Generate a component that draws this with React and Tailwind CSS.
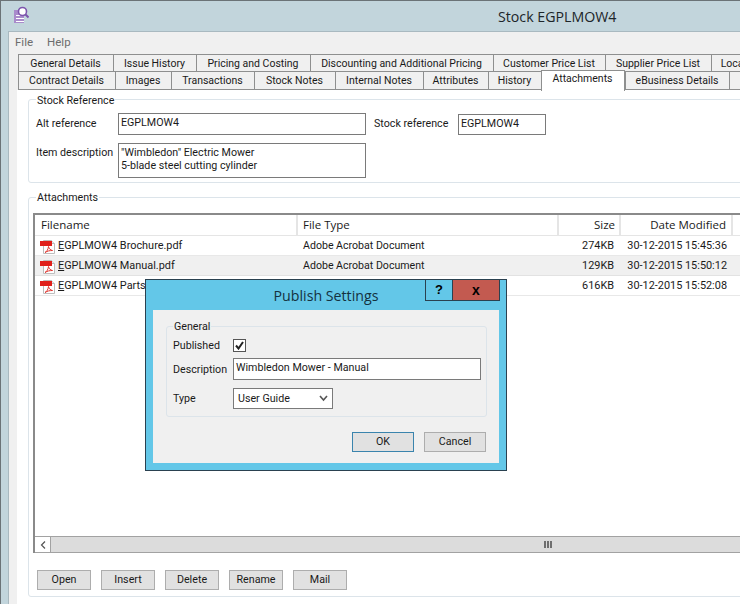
import React from 'react';

const row1 = [
  ['General Details', 95],
  ['Issue History', 83],
  ['Pricing and Costing', 114],
  ['Discounting and Additional Pricing', 183],
  ['Customer Price List', 112],
  ['Supplier Price List', 106],
  ['Location', 60],
];

const row2 = [
  ['Contract Details', 97],
  ['Images', 56],
  ['Transactions', 83],
  ['Stock Notes', 81],
  ['Internal Notes', 88],
  ['Attributes', 65],
  ['History', 53],
  ['Attachments', 84, true],
  ['eBusiness Details', 104],
  ['', 30],
];

const files = [
  { name: 'GPLMOW4 Brochure.pdf', size: '274KB', date: '30-12-2015 15:45:36' },
  { name: 'GPLMOW4 Manual.pdf', size: '129KB', date: '30-12-2015 15:50:12', selected: true },
  { name: 'GPLMOW4 Parts List.pdf', size: '616KB', date: '30-12-2015 15:52:08' },
];

const PdfIcon = () => (
  <svg width="16" height="16" viewBox="0 0 16 16" className="shrink-0">
    <path d="M3.5 2.5H11.500L14.500 5.500v10h-11z" fill="#fff" stroke="#bdbdbd" />
    <path d="M11.500 2.500v3h3" fill="#eee" stroke="#bdbdbd" />
    <rect x="0" y="3" width="12" height="5" fill="#e0201b" />
    <path d="M5 14.500c2-1 3-3 3.500-6 .5 2.500 2 3.500 4 4-3 0-5 .5-7.500 2z" fill="none" stroke="#e0362f" strokeWidth="1" />
  </svg>
);

const AppIcon = () => (
  <svg width="16" height="18" viewBox="0 0 16 18">
    <rect x="1" y="4" width="10" height="13" fill="#a98bcb" />
    <rect x="3" y="9" width="8" height="1" fill="#fff" />
    <rect x="3" y="12" width="8" height="1" fill="#fff" />
    <rect x="3" y="15" width="8" height="1" fill="#fff" />
    <circle cx="9.500" cy="5.500" r="4" fill="#fff" stroke="#7d55ad" strokeWidth="1.600" />
    <path d="M12.500 8.500l3 3" stroke="#7d55ad" strokeWidth="2" />
  </svg>
);

const Btn = ({ label, className = '' }) => (
  <div className={`h-5 flex items-center justify-center bg-[#e1e1e1] border border-[#adadad] ${className}`}>{label}</div>
);

const App = () => {
  return (
    <div className="relative w-[740px] h-[604px] overflow-hidden bg-[#c2d5dc] border-t border-l border-[#6b7377] text-[10.700px] leading-[14px] whitespace-nowrap text-[#1a1a1a] font-['Roboto',sans-serif]">
      {/* title bar */}
      <div className="relative h-[30px] flex items-center">
        <div className="absolute left-[12px] top-[5px]"><AppIcon /></div>
        <div className="ml-[497px] mt-px text-[14.200px] leading-5 text-[#1c2529] font-['Open_Sans',sans-serif]">Stock EGPLMOW4</div>
      </div>

      <div className="ml-[7px] h-[573px] bg-[#f0f0f0] border-t border-l border-[#a9b9c0] flex flex-col">
        {/* menu */}
        <div className="h-[22px] flex items-center gap-[14px] pl-[6px] pb-[2px] text-[11.500px] text-[#6d6d6d]">
          <span>File</span>
          <span>Help</span>
        </div>

        {/* tabs */}
        <div className="flex pl-[9px] h-[18px] text-[10.500px]">
          {row1.map(([t, w]) => (
            <div key={t} style={{ width: w }} className="shrink-0 h-[18px] pt-px pr-px flex items-center justify-center bg-[#f0f0f0] border-l border-t border-b border-[#8e8f8f]">{t}</div>
          ))}
        </div>
        <div className="relative flex pl-[9px] h-[18px] text-[10.500px]">
          {row2.map(([t, w, active]) => (
            <div
              key={t + w}
              style={{ width: w }}
              className={active
                ? 'relative z-10 shrink-0 h-[21px] -mt-[2px] pb-[4px] pr-px flex items-center justify-center bg-white border-l border-r border-t border-[#8e8f8f]'
                : 'shrink-0 h-[18px] pt-px pr-px flex items-center justify-center bg-[#f0f0f0] border-l border-b border-[#8e8f8f]'}
            >
              {t}
            </div>
          ))}
        </div>

        {/* page */}
        <div className="ml-[8px] flex-1 bg-white pl-[11px] pt-[9px] flex flex-col">
          {/* stock reference group */}
          <div className="relative h-[84px] w-[760px] border border-[#dce4ea] rounded-[3px] pl-[7px] pt-[13px]">
            <span className="absolute -top-[6px] left-[7px] bg-white px-[1px]">Stock Reference</span>
            <div className="flex items-center h-[22px]">
              <span className="w-[82px]">Alt reference</span>
              <div className="w-[248px] h-[22px] border border-[#7a7a7a] px-[2px] pt-[2px]">EGPLMOW4</div>
              <span className="ml-[8px] w-[84px]">Stock reference</span>
              <div className="w-[88px] h-[21px] border border-[#7a7a7a] px-[2px] pt-[2px]">EGPLMOW4</div>
            </div>
            <div className="flex mt-[8px]">
              <span className="w-[82px] pt-[3px]">Item description</span>
              <div className="w-[248px] h-[35px] border border-[#7a7a7a] px-[2px] pt-[2px] leading-[13px]">
                <div>"Wimbledon" Electric Mower</div>
                <div>5-blade steel cutting cylinder</div>
              </div>
            </div>
          </div>

          {/* attachments group */}
          <div className="relative mt-[14px] h-[400px] w-[760px] border border-[#dce4ea] rounded-[3px] pl-[4px] pt-[15px]">
            <span className="absolute -top-[7px] left-[7px] bg-white px-[1px]">Attachments</span>

            <div className="h-[340px] w-[740px] border-t-2 border-l-2 border-[#8a8a8a] flex flex-col">
              <div className="h-[21px] grid grid-cols-[262px_261px_62px_112px_1fr] border-b border-[#e5e5e5] pl-px text-[11.500px] font-['Open_Sans',sans-serif]">
                <div className="pl-[5px] flex items-center border-r-2 border-[#e5e5e5]">Filename</div>
                <div className="pl-[5px] flex items-center border-r-2 border-[#e5e5e5]">File Type</div>
                <div className="pr-[4px] flex items-center justify-end border-r-2 border-[#e5e5e5]">Size</div>
                <div className="pr-[5px] flex items-center justify-end border-r-2 border-[#e5e5e5]">Date Modified</div>
                <div />
              </div>

              <div className="flex-1 text-[10.900px]">
                {files.map((f) => (
                  <div
                    key={f.name}
                    className={`h-[20px] grid grid-cols-[262px_261px_62px_112px_1fr] pl-px items-center border-b ${f.selected ? 'bg-[#f0f0f0] border-[#e2e2e2]' : 'border-[#e8e8e8]'}`}
                  >
                    <div className="pl-[4px] flex items-center gap-[2px]">
                      <PdfIcon />
                      <span><u>E</u>{f.name}</span>
                    </div>
                    <div className="pl-[5px] text-[10.600px]">Adobe Acrobat Document</div>
                    <div className="text-right pr-[7px]">{f.size}</div>
                    <div className="text-right pr-[6px]">{f.date}</div>
                    <div />
                  </div>
                ))}
              </div>

              {/* scrollbar */}
              <div className="h-[17px] flex items-stretch bg-[#dcdcdc] border-t border-b border-[#a2a2a2]">
                <div className="w-[16px] bg-white border-r border-[#a2a2a2] flex items-center justify-center">
                  <svg width="6" height="8" viewBox="0 0 6 8"><path d="M5 0.500L1.500 4 5 7.500" fill="none" stroke="#555" strokeWidth="1.200" /></svg>
                </div>
                <div className="ml-[493px] flex items-center gap-px">
                  <div className="w-[2px] h-[7px] bg-[#6f6f6f]" />
                  <div className="w-[2px] h-[7px] bg-[#6f6f6f]" />
                  <div className="w-[2px] h-[7px] bg-[#6f6f6f]" />
                </div>
              </div>
            </div>

            <div className="mt-[17px] ml-[4px] flex gap-[10px]">
              {['Open', 'Insert', 'Delete', 'Rename', 'Mail'].map((b) => (
                <Btn key={b} label={b} className="w-[54px]" />
              ))}
            </div>
          </div>
        </div>
      </div>

      {/* publish settings dialog */}
      <div className="absolute left-[144px] top-[278px] w-[362px] h-[192px] bg-[#63c7e8] border border-[#2a4150] flex flex-col">
        <div className="relative h-[30px] flex items-center justify-center text-[14.200px] text-[#14323f] font-['Open_Sans',sans-serif]">
          <span className="mt-[1px]">Publish Settings</span>
          <div className="absolute right-[6px] top-0 flex h-[21px] border border-t-0 border-[#2a4150]">
            <div className="w-[27px] flex items-center justify-center border-r border-[#2a4150] text-[13px] font-bold text-black font-['Liberation_Sans',sans-serif]">?</div>
            <div className="w-[46px] bg-[#c35a50] flex items-center justify-center text-[14px] font-bold text-black font-['Liberation_Sans',sans-serif]">x</div>
          </div>
        </div>
        <div className="mx-[7px] flex-1 mb-[7px] bg-[#f0f0f0] pl-[13px] pt-[16px]">
          <div className="relative h-[91px] w-[321px] border border-[#dce4ea] rounded-[3px] pl-[6px] pt-[12px] bg-[#f0f0f0]">
            <span className="absolute -top-[7px] left-[6px] bg-[#f0f0f0] px-px">General</span>
            <div className="flex items-center h-[14px]">
              <span className="w-[60px]">Published</span>
              <div className="w-[13px] h-[13px] -mt-[2px] border border-[#555] bg-white flex items-center justify-center">
                <svg width="9" height="9" viewBox="0 0 9 9"><path d="M1 4.500L3.500 7.500 8 1" fill="none" stroke="#222" strokeWidth="2" /></svg>
              </div>
            </div>
            <div className="flex items-center mt-[5px]">
              <span className="w-[60px] pt-[2px]">Description</span>
              <div className="w-[248px] h-[22px] border border-[#7a7a7a] bg-white px-[2px] pt-[2px]">Wimbledon Mower - Manual</div>
            </div>
            <div className="flex items-center mt-[8px]">
              <span className="w-[60px]">Type</span>
              <div className="w-[100px] h-[21px] border border-[#7a7a7a] bg-white pl-[4px] flex items-center justify-between pr-[4px]">
                <span>User Guide</span>
                <svg width="9" height="7" viewBox="0 0 9 7"><path d="M1 1l3.500 4L8 1" fill="none" stroke="#555" strokeWidth="1.600" /></svg>
              </div>
            </div>
          </div>
          <div className="mt-[15px] ml-[186px] flex gap-[10px]">
            <Btn label="OK" className="w-[62px] !border-[#3a84ad]" />
            <Btn label="Cancel" className="w-[62px]" />
          </div>
        </div>
      </div>
    </div>
  );
};

export default App;
